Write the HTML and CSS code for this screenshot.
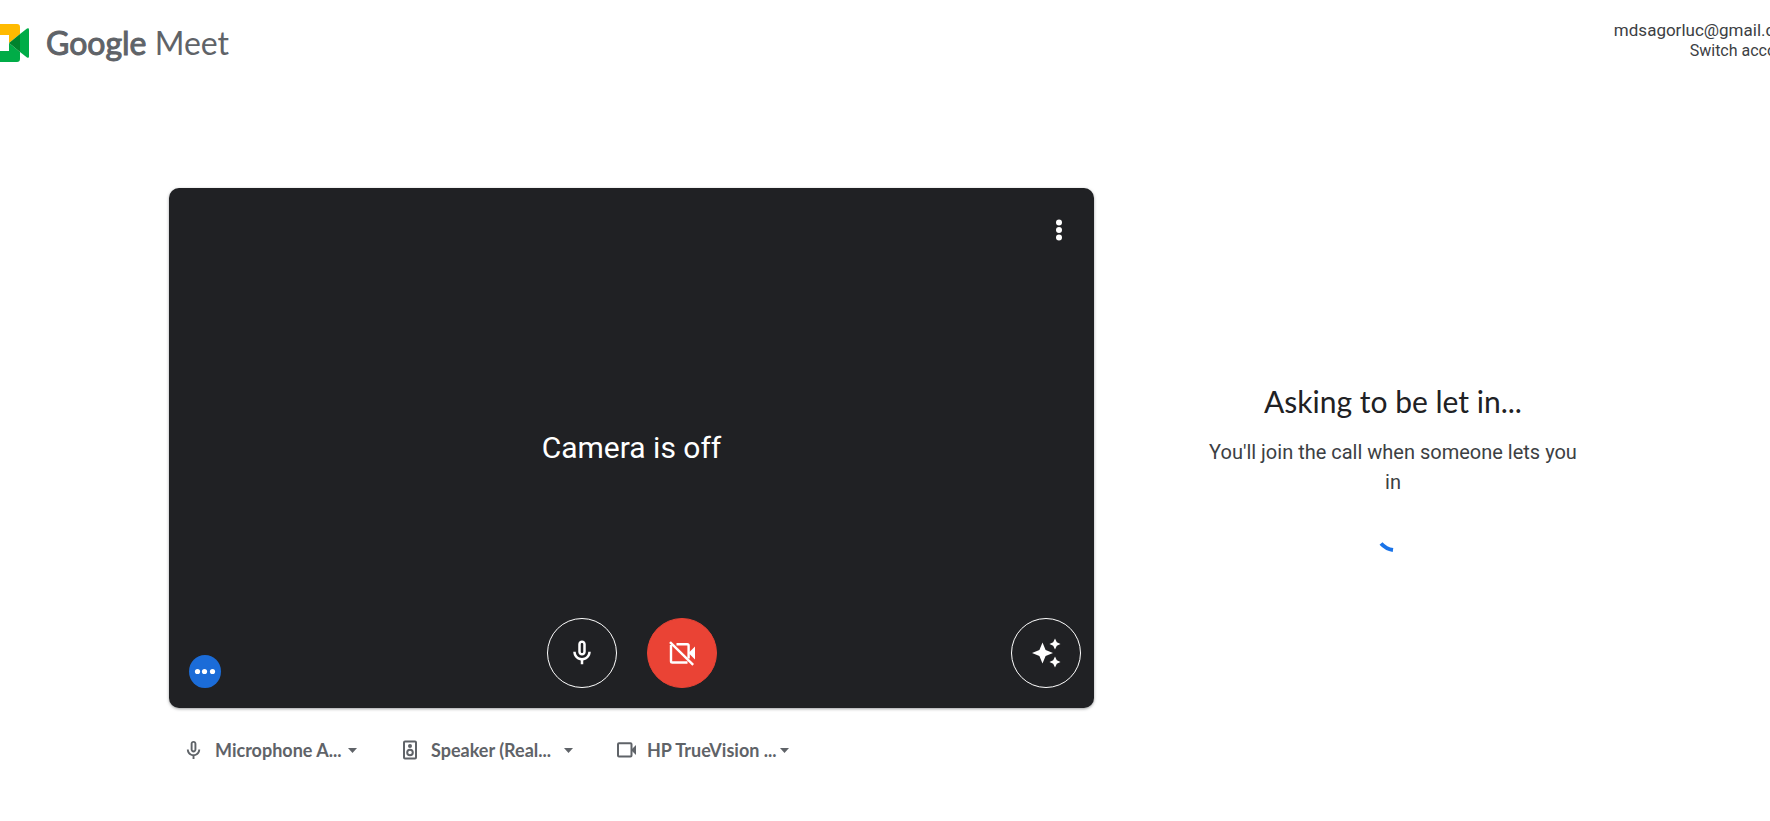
FILE: index.html
```html
<!DOCTYPE html>
<html lang="en">
<head>
<meta charset="utf-8">
<title>Google Meet</title>
<link rel="stylesheet" href="styles.css">
</head>
<body>
<header class="topbar">
  <div class="brand">
    <svg class="brand-mark" viewBox="0 0 29 38" aria-hidden="true">
      <path fill="#ffba00" d="M0 0H17Q20 0 20 3V10L9 19V11H0Z"/>
      <path fill="#00ac47" d="M0 27H9V19L20 28V35Q20 38 17 38H0Z"/>
      <path fill="#00ac47" d="M20 10L27 4.500Q29 3.500 29 5.500V32.500Q29 34.500 27 33.500L20 28Z"/>
      <path fill="#00832d" d="M9 19L20 10V28Z"/>
    </svg>
    <span class="brand-name"><span class="brand-strong">Google</span> Meet</span>
  </div>
  <div class="account">
    <span class="email">mdsagorluc@gmail.com</span>
    <a class="switch" href="#">Switch account</a>
  </div>
</header>
<main class="lobby">
  <section class="preview">
    <div class="video">
      <button class="more" type="button" aria-label="More options">
        <svg width="24" height="24" viewBox="0 0 24 24" fill="#fff"><circle cx="12" cy="4.500" r="3"/><circle cx="12" cy="12" r="3"/><circle cx="12" cy="19.500" r="3"/></svg>
      </button>
      <p class="status">Camera is off</p>
      <div class="controls">
        <div class="side-left">
          <span class="dots" aria-hidden="true"><svg width="32" height="33" viewBox="0 0 32 33" fill="#fff"><circle cx="8.500" cy="16.500" r="2.600"/><circle cx="15.500" cy="16.500" r="2.600"/><circle cx="23.500" cy="16.500" r="2.600"/></svg></span>
        </div>
        <div class="center">
          <button class="round" type="button" aria-label="Turn off microphone">
            <svg width="30" height="30" viewBox="0 0 24 24" fill="#fff"><path d="M12 14c1.660 0 3-1.340 3-3V5c0-1.660-1.340-3-3-3S9 3.340 9 5v6c0 1.660 1.340 3 3 3zm-1-9c0-.55.45-1 1-1s1 .45 1 1v6c0 .55-.45 1-1 1s-1-.45-1-1V5zm6 6c0 2.760-2.240 5-5 5s-5-2.240-5-5H5c0 3.530 2.610 6.430 6 6.920V21h2v-3.080c3.390-.49 6-3.390 6-6.920h-2z"/></svg>
          </button>
          <button class="round off" type="button" aria-label="Turn on camera">
            <svg width="30" height="30" viewBox="0 0 30 30" fill="none" stroke="#fff" stroke-width="2.400"><path d="M4 7V23.200Q4 24.500 5.300 24.500H20.500"/><path d="M9.500 6.200H20.300Q21.600 6.200 21.600 7.500V20.500"/><path d="M3 4.200L26.200 26.800"/><path d="M21.500 15L28 8.500V21.500Z" fill="#fff" stroke="none"/></svg>
          </button>
        </div>
        <div class="side-right">
          <button class="round" type="button" aria-label="Apply visual effects">
            <svg width="32" height="32" viewBox="0 0 32 32" fill="#fff"><path d="M12.500 5.500L15.600 12.900L23 16L15.600 19.100L12.500 26.500L9.400 19.100L2 16L9.400 12.900Z"/><path d="M25 1.500L26.800 5.200L30.500 7L26.800 8.800L25 12.500L23.200 8.800L19.500 7L23.200 5.200Z"/><path d="M25 19.500L26.800 23.200L30.500 25L26.800 26.800L25 30.500L23.200 26.800L19.500 25L23.200 23.200Z"/></svg>
          </button>
        </div>
      </div>
    </div>
    <div class="devices">
      <label class="device">
        <svg width="20" height="20" viewBox="2 1 21 21" fill="#5f6368"><path d="M12 14c1.660 0 3-1.340 3-3V5c0-1.660-1.340-3-3-3S9 3.340 9 5v6c0 1.660 1.340 3 3 3zm-1-9c0-.55.45-1 1-1s1 .45 1 1v6c0 .55-.45 1-1 1s-1-.45-1-1V5zm6 6c0 2.760-2.240 5-5 5s-5-2.240-5-5H5c0 3.530 2.610 6.430 6 6.920V21h2v-3.080c3.390-.49 6-3.390 6-6.920h-2z"/></svg>
        <select class="picker" aria-label="Microphone"><option>Microphone A...</option></select>
        <svg class="caret" width="9" height="5" viewBox="0 0 9 5" fill="#5f6368"><path d="M0 0H9L4.500 5Z"/></svg>
      </label>
      <label class="device">
        <svg width="20" height="20" viewBox="0 0 20 20" fill="none" stroke="#5f6368" stroke-width="2"><rect x="4" y="1.500" width="12" height="17" rx="1"/><circle cx="10" cy="12.500" r="2.800"/><circle cx="10" cy="6" r="2" fill="#5f6368" stroke="none"/></svg>
        <select class="picker" aria-label="Speaker"><option>Speaker (Real...</option></select>
        <svg class="caret" width="9" height="5" viewBox="0 0 9 5" fill="#5f6368"><path d="M0 0H9L4.500 5Z"/></svg>
      </label>
      <label class="device">
        <svg width="20" height="20" viewBox="0 0 20 20" fill="none" stroke="#5f6368" stroke-width="2"><rect x="2" y="3.200" width="13.500" height="13.300" rx="1"/><path d="M15 10L20 5V15Z" fill="#5f6368" stroke="none"/></svg>
        <select class="picker" aria-label="Camera"><option>HP TrueVision ...</option></select>
        <svg class="caret" width="9" height="5" viewBox="0 0 9 5" fill="#5f6368"><path d="M0 0H9L4.500 5Z"/></svg>
      </label>
    </div>
  </section>
  <section class="waiting">
    <h1 class="title">Asking to be let in...</h1>
    <p class="hint">You'll join the call when someone lets you in</p>
    <svg class="spinner" width="36" height="36" viewBox="0 0 36 36" fill="none" stroke="#1a73e8" stroke-width="4" role="img" aria-label="Loading"><path d="M6 26.500Q11 32 18 33"/></svg>
  </section>
</main>
</body>
</html>
```
FILE: styles.css
```css
* { box-sizing: border-box; }
body {
  margin: 0;
  background: #fff;
  color: #202124;
  font-family: Roboto, "Liberation Sans", sans-serif;
  overflow: hidden;
}
button {
  padding: 0;
  border: 0;
  background: none;
  cursor: pointer;
}
.topbar {
  display: flex;
  justify-content: space-between;
  align-items: flex-start;
  height: 88px;
  overflow: hidden;
}
.brand {
  display: flex;
  align-items: center;
  gap: 17px;
  padding-top: 20px;
}
.brand-mark { width: 29px; height: 38px; }
.brand-name {
  font: 400 32px/46px Lato, sans-serif;
  color: #5f6368;
  white-space: nowrap;
}
.brand-strong { -webkit-text-stroke: 1px #5f6368; }
.account {
  display: flex;
  flex-direction: column;
  align-items: flex-end;
  flex: none;
  margin-right: -29px;
  padding-top: 19px;
  color: #3c4043;
}
.email { font-size: 17px; line-height: 22px; }
.switch {
  font-size: 16px;
  line-height: 20px;
  color: inherit;
  text-decoration: none;
}
.lobby {
  display: flex;
  align-items: flex-start;
  gap: 106px;
  padding: 100px 180px 0 169px;
}
.preview { flex: 1; min-width: 0; }
.video {
  display: grid;
  grid-template-rows: 1fr auto 1fr;
  aspect-ratio: 925 / 520;
  padding: 20px 13px;
  border-radius: 10px;
  background: #202124;
  box-shadow: 0 1px 3px rgba(60, 64, 67, .5);
}
.more {
  width: 44px;
  height: 44px;
  justify-self: end;
  display: grid;
  place-items: center;
}
.status {
  margin: 0;
  text-align: center;
  color: #fff;
  font-size: 30px;
  line-height: 40px;
}
.controls {
  display: grid;
  grid-template-columns: 1fr auto 1fr;
  align-items: end;
}
.center { display: flex; gap: 30px; }
.side-left { padding-left: 7px; }
.side-right { display: flex; justify-content: flex-end; }
.dots {
  display: block;
  width: 32px;
  height: 33px;
  border-radius: 50%;
  background: #1b6cd8;
}
.round {
  display: grid;
  place-items: center;
  width: 70px;
  height: 70px;
  border: 1px solid #fff;
  border-radius: 50%;
}
.off { background: #ea4335; border-color: #ea4335; }
.devices {
  display: flex;
  gap: 40px;
  padding: 30px 15px;
}
.device {
  display: flex;
  align-items: center;
  width: 176px;
}
.picker {
  appearance: none;
  flex: none;
  width: 133px;
  margin-left: 11px;
  padding: 0;
  border: 0;
  background: none;
  color: #5f6368;
  font: 700 18px/24px Lato, sans-serif;
}
.caret { flex: none; }
.waiting {
  width: 390px;
  padding: 0 4px 0 0;
  margin-top: 193px;
  text-align: center;
}
.title {
  margin: 0;
  font: 400 30px/40px Lato, sans-serif;
}
.hint {
  margin: 16px 0 0;
  color: #3c4043;
  font-size: 20px;
  line-height: 30px;
}
.spinner {
  display: block;
  margin: 20px auto 0;
}
```
